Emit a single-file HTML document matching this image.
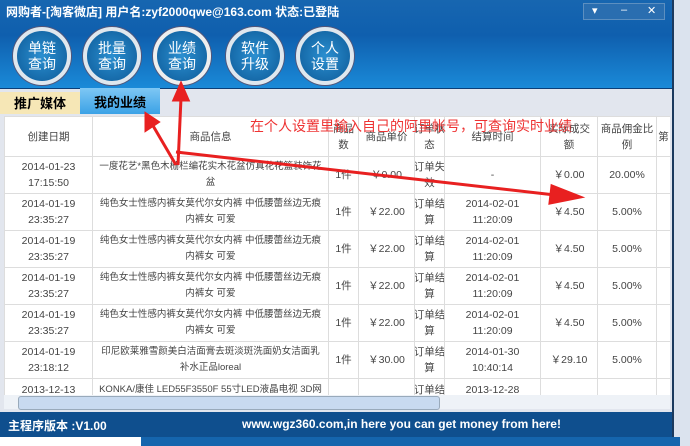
<!DOCTYPE html><html><head><meta charset="utf-8"><style>
body{margin:0;width:690px;height:446px;overflow:hidden;background:#fff;font-family:"Liberation Sans","Noto Sans CJK SC",sans-serif;position:relative}
.bg{position:absolute;left:672px;top:0;width:18px;height:446px;background:#dbe3ee}
.win{position:absolute;left:0;top:0;width:672px;height:437px;background:#e2e6ee;border-right:2px solid #1b3a5e}
.hdr{position:absolute;left:0;top:0;width:672px;height:88px;background:linear-gradient(#1766b0,#0f5fae 40%,#1a8ad8);border-bottom:1px solid #0b3f78}
.title{position:absolute;left:6px;top:3px;color:#fff;font-size:12px;font-weight:bold}
.btn{position:absolute;top:27px;width:50px;height:50px;border-radius:50%;background:radial-gradient(#2b8fd0,#0d5a98);border:4px solid #dfe7ee;box-shadow:0 0 0 1px #557;color:#fff;font-size:14px;text-align:center;line-height:16px;box-sizing:content-box}
.btn span{display:block;padding-top:9px}
.ctl{position:absolute;left:583px;top:3px;width:80px;height:15px;background:#2a6eb0;border:1px solid #5c8fc0;color:#fff;font-size:11px}
.tab1{position:absolute;left:0;top:92px;width:80px;height:22px;background:#f6e7b6;font-size:13px;font-weight:bold;text-align:center;line-height:24px}
.tab2{position:absolute;left:80px;top:88px;width:80px;height:26px;background:linear-gradient(#7ec7f4,#3ba2e6);font-size:13px;font-weight:bold;text-align:center;line-height:30px}
.tw{position:absolute;left:4px;top:116px;width:666px;height:279px;overflow:hidden;background:#fff}
table{width:666px;border-collapse:collapse;background:#fff;font-size:10.5px;color:#444;table-layout:fixed}
td{border:1px solid #ddd;text-align:center;padding:0;line-height:16px;overflow:hidden}
td>div{height:36px;display:flex;align-items:center;justify-content:center;overflow:hidden;white-space:nowrap}
tr:first-child td>div{height:39px}
td.w>div{white-space:normal;font-size:9.5px;padding:0 3px}
.scroll{position:absolute;left:4px;top:395px;width:666px;height:14px;background:#eef2f7}
.thumb{position:absolute;left:14px;top:1px;width:420px;height:12px;background:#c8daf0;border:1px solid #9ab;border-radius:3px}
.status{position:absolute;left:0;top:412px;width:672px;height:25px;background:#0f4f8e;color:#fff;font-size:12px;font-weight:bold}
.bot{position:absolute;left:141px;top:437px;width:539px;height:9px;background:#1565ad}
.red{position:absolute;left:250px;top:116px;color:#e33;font-size:14px}
</style></head><body>
<div class="bg"></div><div class="bot"></div>
<div class="win">
<div class="hdr">
<div class="title">网购者-[淘客微店] 用户名:zyf2000qwe@163.com 状态:已登陆</div>
<div class="ctl"><span style="position:absolute;left:8px">▾</span><span style="position:absolute;left:37px">–</span><span style="position:absolute;left:63px">✕</span></div>
<div class="btn" style="left:13px"><span>单链<br>查询</span></div>
<div class="btn" style="left:83px"><span>批量<br>查询</span></div>
<div class="btn" style="left:153px;border-color:#eee"><span>业绩<br>查询</span></div>
<div class="btn" style="left:226px"><span>软件<br>升级</span></div>
<div class="btn" style="left:296px"><span>个人<br>设置</span></div>
</div>
<div class="tab1">推广媒体</div><div class="tab2">我的业绩</div>
<div class="tw"><table>
<colgroup><col style="width:88px"><col style="width:236px"><col style="width:30px"><col style="width:56px"><col style="width:30px"><col style="width:96px"><col style="width:57px"><col style="width:59px"><col style="width:14px"></colgroup>
<tr><td><div>创建日期</div></td><td><div>商品信息</div></td><td><div>商品<br>数</div></td><td><div>商品单价</div></td><td><div>订单状<br>态</div></td><td><div>结算时间</div></td><td><div>实际成交<br>额</div></td><td><div>商品佣金比<br>例</div></td><td><div>第</div></td></tr>
<tr><td><div>2014-01-23<br>17:15:50</div></td><td class="w"><div>一度花艺*黑色木栅栏编花实木花盆仿真花花篮装饰花盆</div></td><td><div>1件</div></td><td><div>￥0.00</div></td><td><div>订单失<br>效</div></td><td><div>-</div></td><td><div>￥0.00</div></td><td><div>20.00%</div></td><td></td></tr>
<tr><td><div>2014-01-19<br>23:35:27</div></td><td class="w"><div>纯色女士性感内裤女莫代尔女内裤 中低腰蕾丝边无痕<br>内裤女 可爱</div></td><td><div>1件</div></td><td><div>￥22.00</div></td><td><div>订单结<br>算</div></td><td><div>2014-02-01<br>11:20:09</div></td><td><div>￥4.50</div></td><td><div>5.00%</div></td><td></td></tr>
<tr><td><div>2014-01-19<br>23:35:27</div></td><td class="w"><div>纯色女士性感内裤女莫代尔女内裤 中低腰蕾丝边无痕<br>内裤女 可爱</div></td><td><div>1件</div></td><td><div>￥22.00</div></td><td><div>订单结<br>算</div></td><td><div>2014-02-01<br>11:20:09</div></td><td><div>￥4.50</div></td><td><div>5.00%</div></td><td></td></tr>
<tr><td><div>2014-01-19<br>23:35:27</div></td><td class="w"><div>纯色女士性感内裤女莫代尔女内裤 中低腰蕾丝边无痕<br>内裤女 可爱</div></td><td><div>1件</div></td><td><div>￥22.00</div></td><td><div>订单结<br>算</div></td><td><div>2014-02-01<br>11:20:09</div></td><td><div>￥4.50</div></td><td><div>5.00%</div></td><td></td></tr>
<tr><td><div>2014-01-19<br>23:35:27</div></td><td class="w"><div>纯色女士性感内裤女莫代尔女内裤 中低腰蕾丝边无痕<br>内裤女 可爱</div></td><td><div>1件</div></td><td><div>￥22.00</div></td><td><div>订单结<br>算</div></td><td><div>2014-02-01<br>11:20:09</div></td><td><div>￥4.50</div></td><td><div>5.00%</div></td><td></td></tr>
<tr><td><div>2014-01-19<br>23:18:12</div></td><td class="w"><div>印尼欧莱雅雪颜美白洁面膏去斑淡斑洗面奶女洁面乳<br>补水正品loreal</div></td><td><div>1件</div></td><td><div>￥30.00</div></td><td><div>订单结<br>算</div></td><td><div>2014-01-30<br>10:40:14</div></td><td><div>￥29.10</div></td><td><div>5.00%</div></td><td></td></tr>
<tr><td><div style="align-items:flex-start;padding-top:3px">2013-12-13</div></td><td class="w"><div style="align-items:flex-start;padding-top:3px">KONKA/康佳 LED55F3550F 55寸LED液晶电视 3D网</div></td><td></td><td></td><td><div style="align-items:flex-start;padding-top:3px">订单结</div></td><td><div style="align-items:flex-start;padding-top:3px">2013-12-28</div></td><td></td><td></td><td></td></tr>
</table></div>
<div class="scroll"><div class="thumb"></div></div>
<div class="status"><span style="position:absolute;left:8px;top:5px">主程序版本 :V1.00</span><span style="position:absolute;left:242px;top:5px">www.wgz360.com,in here you can get money from here!</span></div>
</div>
<div class="red">在个人设置里输入自己的阿里帐号，可查询实时业绩</div>
<svg style="position:absolute;left:0;top:0" width="690" height="446"><g stroke="#e82020" stroke-width="3" fill="#e82020">
<line x1="178" y1="165" x2="181" y2="98"/><polygon points="174,100 181,84 188,100"/>
<line x1="176" y1="165" x2="152" y2="124"/><polygon points="146,130 146,114 158,122"/>
<line x1="176" y1="152" x2="555" y2="195"/><polygon points="552,186 580,197 550,203"/>
</g></svg>
</body></html>
